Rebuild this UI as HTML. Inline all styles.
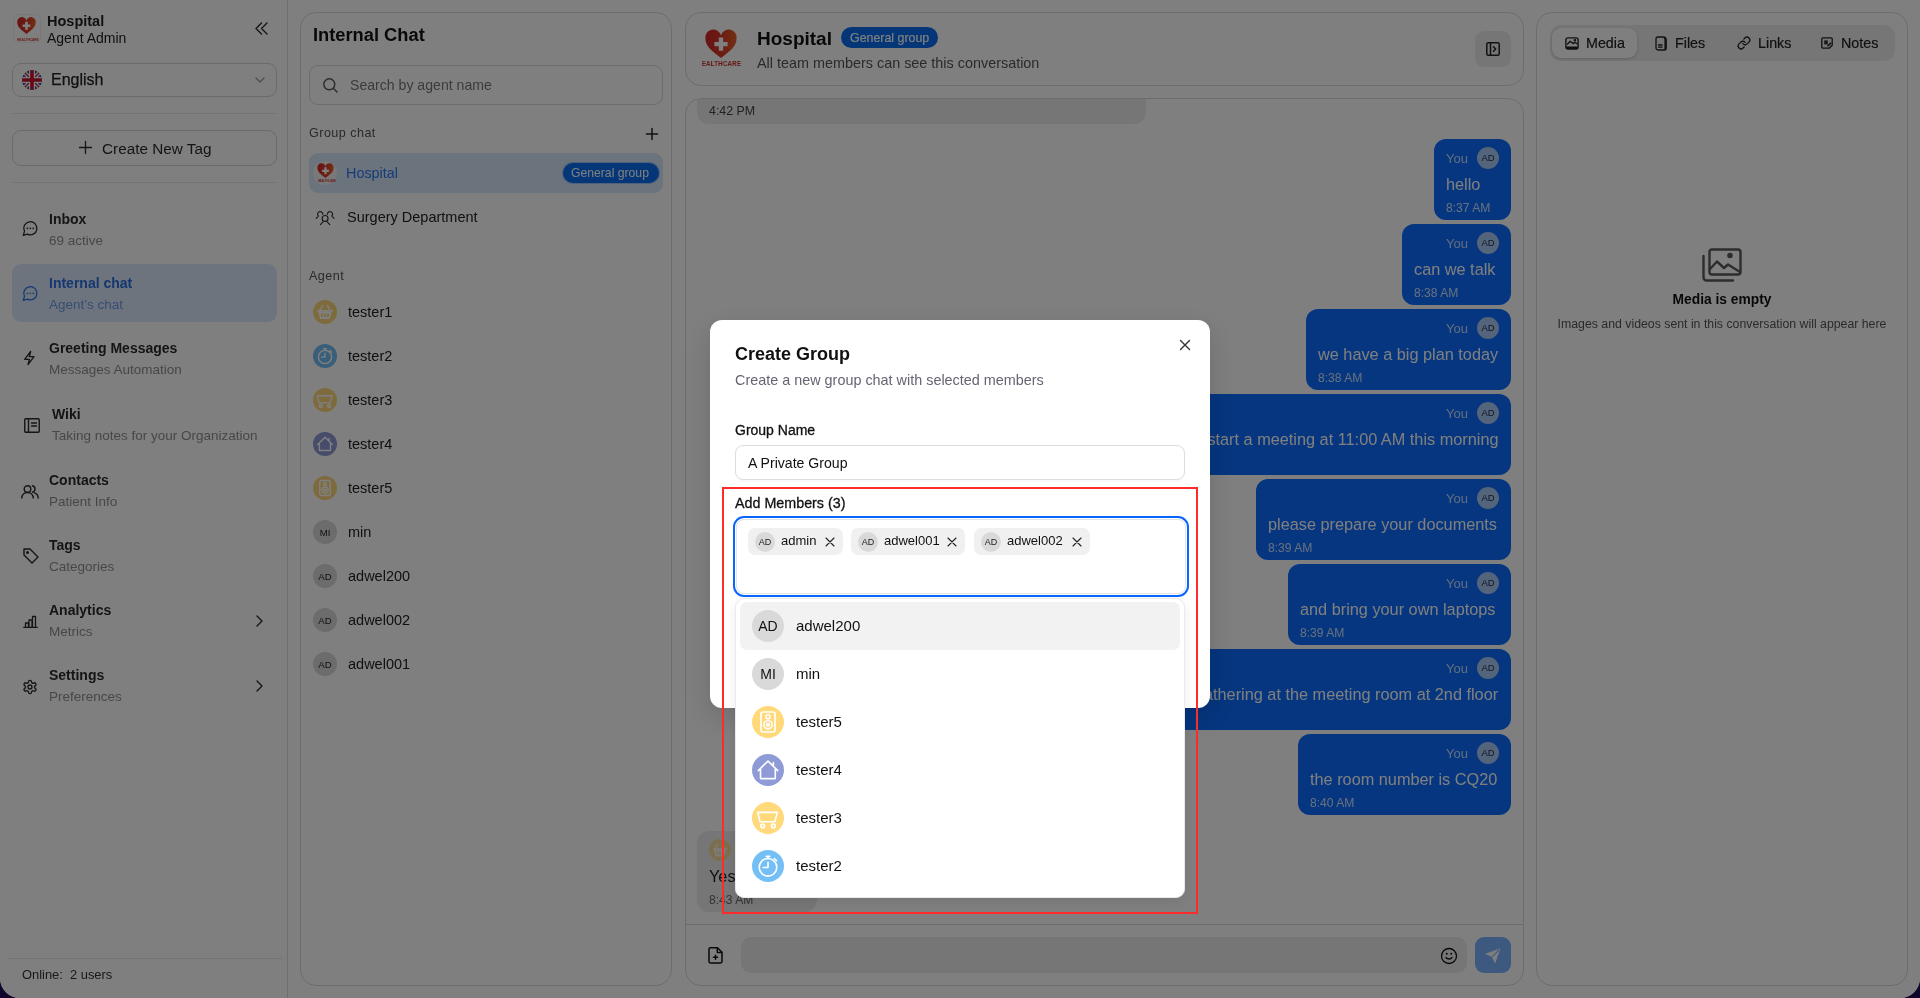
<!DOCTYPE html><html><head><meta charset="utf-8"><style>
*{box-sizing:border-box;margin:0;padding:0}
html,body{width:1920px;height:998px;overflow:hidden;background:#10052a}
body{font-family:"Liberation Sans",sans-serif;color:#222;position:relative}
.abs{position:absolute}
.t{position:absolute;white-space:nowrap;line-height:1;will-change:transform}
svg{overflow:visible}
</style></head><body>
<div class="abs" style="left:0;top:0;width:1920px;height:998px;background:#fff;border-radius:0 0 20px 20px"></div>
<div class="abs" style="left:287px;top:0px;width:1px;height:998px;background:#dcdcdc"></div>
<div class="abs" style="left:13px;top:14px;width:28px;height:29px;border-radius:6px;background:#fff;border:1px solid #eee"></div>
<svg class="abs" style="left:17px;top:18px;" width="19" height="16" viewBox="0 0 32 27" fill="none" stroke="#2a2a2a" stroke-width="1.5" stroke-linecap="round" stroke-linejoin="round"><defs><linearGradient id="hg" x1="0" y1="0" x2="1" y2="0"><stop offset="0" stop-color="#d3262a"/><stop offset="0.55" stop-color="#d83a26"/><stop offset="1" stop-color="#e5622c"/></linearGradient></defs><path d="M16 27C6 19.5 0.5 14.5 0.5 8.2A7.6 7.6 0 0 1 16 4.6A7.6 7.6 0 0 1 31.5 8.2C31.5 14.5 26 19.5 16 27Z" fill="url(#hg)" stroke="none"/><path d="M13.8 6.5h4.4v4.4h4.4v4.4h-4.4v4.4h-4.4v-4.4h-4.4v-4.4h4.4z" fill="#fff" stroke="none"/></svg>
<div class="t" style="left:17.00px;top:39.29px;font-size:3.2px;font-weight:700;color:#c8302a;">HEALTHCARE</div>
<div class="t" style="left:47.00px;top:13.73px;font-size:14.5px;font-weight:700;color:#222;">Hospital</div>
<div class="t" style="left:47.00px;top:30.55px;font-size:14px;font-weight:400;color:#222;">Agent Admin</div>
<svg class="abs" style="left:255px;top:22px;" width="13" height="13" viewBox="0 0 13 13" fill="none" stroke="#2a2a2a" stroke-width="1.4" stroke-linecap="round" stroke-linejoin="round"><path d="M6.5 1 1 6.5 6.5 12M12 1 6.5 6.5 12 12"/></svg>
<div class="abs" style="left:12px;top:63px;width:265px;height:34px;border:1px solid #d6d6d6;border-radius:9px"></div>
<svg class="abs" style="left:22px;top:70px" width="20" height="20" viewBox="0 0 20 20"><defs><clipPath id="fc"><circle cx="10" cy="10" r="10"/></clipPath></defs><g clip-path="url(#fc)"><rect width="20" height="20" fill="#1f4aa0"/><path d="M0 0L20 20M20 0L0 20" stroke="#fff" stroke-width="4"/><path d="M0 0L20 20M20 0L0 20" stroke="#c8102e" stroke-width="1.3"/><path d="M10 0V20M0 10H20" stroke="#fff" stroke-width="6"/><path d="M10 0V20M0 10H20" stroke="#c8102e" stroke-width="3.6"/></g></svg>
<div class="t" style="left:50.50px;top:72.46px;font-size:16px;font-weight:400;color:#222;-webkit-text-stroke:0.25px #222">English</div>
<svg class="abs" style="left:255px;top:77px;" width="10" height="6" viewBox="0 0 10 6" fill="none" stroke="#999" stroke-width="1.2" stroke-linecap="round" stroke-linejoin="round"><path d="M1 1 5 5 9 1"/></svg>
<div class="abs" style="left:12px;top:113px;width:265px;height:1px;background:#e6e6e6"></div>
<div class="abs" style="left:12px;top:130px;width:265px;height:36px;border:1px solid #d6d6d6;border-radius:9px"></div>
<svg class="abs" style="left:79px;top:141px;" width="13" height="13" viewBox="0 0 13 13" fill="none" stroke="#2a2a2a" stroke-width="1.3" stroke-linecap="round" stroke-linejoin="round"><path d="M6.5 0.5v12M0.5 6.5h12"/></svg>
<div class="t" style="left:102.00px;top:140.55px;font-size:15.3px;font-weight:400;color:#2a2a2a;">Create New Tag</div>
<div class="abs" style="left:12px;top:182px;width:265px;height:1px;background:#e6e6e6"></div>
<div class="abs" style="left:12px;top:264px;width:265px;height:58px;background:#dbe9fb;border-radius:9px"></div>
<div class="t" style="left:48.50px;top:211.75px;font-size:14px;font-weight:700;color:#2a2a2a;">Inbox</div>
<div class="t" style="left:48.50px;top:233.77px;font-size:13.5px;font-weight:400;color:#8f8f8f;">69 active</div>
<svg class="abs" style="left:22.9px;top:221.29999999999998px;" width="15" height="15" viewBox="2 2 20.5 20.5" fill="none" stroke="#2a2a2a" stroke-width="1.75" stroke-linecap="round" stroke-linejoin="round"><path d="M7.9 20A9 9 0 1 0 4 16.1L2.3 21.7Z"/><path d="M8 12h.01M12 12h.01M16 12h.01" stroke-width="2.3"/></svg>
<div class="t" style="left:48.50px;top:276.15px;font-size:14px;font-weight:700;color:#2a70e0;">Internal chat</div>
<div class="t" style="left:48.50px;top:298.17px;font-size:13.5px;font-weight:400;color:#6a9ae6;">Agent’s chat</div>
<svg class="abs" style="left:22.9px;top:285.7px;" width="15" height="15" viewBox="2 2 20.5 20.5" fill="none" stroke="#2a70e0" stroke-width="1.75" stroke-linecap="round" stroke-linejoin="round"><path d="M7.9 20A9 9 0 1 0 4 16.1L2.3 21.7Z"/><path d="M8 12h.01M12 12h.01M16 12h.01" stroke-width="2.3"/></svg>
<div class="t" style="left:48.50px;top:341.45px;font-size:14px;font-weight:700;color:#2a2a2a;">Greeting Messages</div>
<div class="t" style="left:48.50px;top:363.47px;font-size:13.5px;font-weight:400;color:#8f8f8f;">Messages Automation</div>
<svg class="abs" style="left:22px;top:349.3px;" width="16" height="18" viewBox="0 0 24 24" fill="none" stroke="#2a2a2a" stroke-width="2" stroke-linecap="round" stroke-linejoin="round"><path d="M13 2 4 14h7l-2 8 9-12h-7z"/></svg>
<div class="t" style="left:52.00px;top:407.15px;font-size:14px;font-weight:700;color:#2a2a2a;">Wiki</div>
<div class="t" style="left:52.00px;top:429.17px;font-size:13.5px;font-weight:400;color:#8f8f8f;">Taking notes for your Organization</div>
<svg class="abs" style="left:24px;top:417.5px;" width="16" height="15" viewBox="0 0 16 15" fill="none" stroke="#2a2a2a" stroke-width="1.4" stroke-linecap="round" stroke-linejoin="round"><rect x="0.75" y="0.75" width="14.5" height="13.5" rx="1"/><path d="M4.5 1v13M7.5 5h5M7.5 8h5"/></svg>
<div class="t" style="left:48.50px;top:473.35px;font-size:14px;font-weight:700;color:#2a2a2a;">Contacts</div>
<div class="t" style="left:48.50px;top:495.37px;font-size:13.5px;font-weight:400;color:#8f8f8f;">Patient Info</div>
<svg class="abs" style="left:21px;top:485.2px;" width="18" height="14" viewBox="0 0 18 14" fill="none" stroke="#2a2a2a" stroke-width="1.4" stroke-linecap="round" stroke-linejoin="round"><circle cx="6.5" cy="4" r="3.3"/><path d="M0.8 13c0-3.2 2.5-5.5 5.7-5.5s5.7 2.3 5.7 5.5"/><path d="M11.5 0.8a3.3 3.3 0 0 1 0 6.4M13.5 7.8c2.2.8 3.7 2.7 3.7 5.2"/></svg>
<div class="t" style="left:48.50px;top:537.85px;font-size:14px;font-weight:700;color:#2a2a2a;">Tags</div>
<div class="t" style="left:48.50px;top:559.87px;font-size:13.5px;font-weight:400;color:#8f8f8f;">Categories</div>
<svg class="abs" style="left:23px;top:548.2px;" width="16" height="16" viewBox="0 0 16 16" fill="none" stroke="#2a2a2a" stroke-width="1.4" stroke-linecap="round" stroke-linejoin="round"><path d="M1 1h6l8 8-6 6-8-8z" transform="rotate(0)"/><circle cx="4.5" cy="4.5" r="0.8" fill="#2a2a2a"/></svg>
<div class="t" style="left:48.50px;top:602.95px;font-size:14px;font-weight:700;color:#2a2a2a;">Analytics</div>
<div class="t" style="left:48.50px;top:624.97px;font-size:13.5px;font-weight:400;color:#8f8f8f;">Metrics</div>
<svg class="abs" style="left:23px;top:614.8px;" width="15" height="13" viewBox="0 0 15 13" fill="none" stroke="#2a2a2a" stroke-width="1.3" stroke-linecap="round" stroke-linejoin="round"><path d="M0.7 12.3h13.6M2.5 12V8h3v4M6 12V5h3v7M9.5 12V1.5h3V12"/></svg>
<svg class="abs" style="left:256px;top:614.8px;" width="7" height="12" viewBox="0 0 7 12" fill="none" stroke="#2a2a2a" stroke-width="1.4" stroke-linecap="round" stroke-linejoin="round"><path d="M1 1l5 5-5 5"/></svg>
<div class="t" style="left:48.50px;top:668.15px;font-size:14px;font-weight:700;color:#2a2a2a;">Settings</div>
<div class="t" style="left:48.50px;top:690.17px;font-size:13.5px;font-weight:400;color:#8f8f8f;">Preferences</div>
<svg class="abs" style="left:22px;top:678.5px;" width="16" height="16" viewBox="0 0 24 24" fill="none" stroke="#2a2a2a" stroke-width="2" stroke-linecap="round" stroke-linejoin="round"><path d="M12.22 2h-.44a2 2 0 0 0-2 2v.18a2 2 0 0 1-1 1.73l-.43.25a2 2 0 0 1-2 0l-.15-.08a2 2 0 0 0-2.73.73l-.22.38a2 2 0 0 0 .73 2.73l.15.1a2 2 0 0 1 1 1.72v.51a2 2 0 0 1-1 1.74l-.15.09a2 2 0 0 0-.73 2.73l.22.38a2 2 0 0 0 2.73.73l.15-.08a2 2 0 0 1 2 0l.43.25a2 2 0 0 1 1 1.73V20a2 2 0 0 0 2 2h.44a2 2 0 0 0 2-2v-.18a2 2 0 0 1 1-1.73l.43-.25a2 2 0 0 1 2 0l.15.08a2 2 0 0 0 2.73-.73l.22-.39a2 2 0 0 0-.73-2.73l-.15-.08a2 2 0 0 1-1-1.74v-.5a2 2 0 0 1 1-1.74l.15-.09a2 2 0 0 0 .73-2.73l-.22-.38a2 2 0 0 0-2.73-.73l-.15.08a2 2 0 0 1-2 0l-.43-.25a2 2 0 0 1-1-1.73V4a2 2 0 0 0-2-2z"/><circle cx="12" cy="12" r="3"/></svg>
<svg class="abs" style="left:256px;top:680px;" width="7" height="12" viewBox="0 0 7 12" fill="none" stroke="#2a2a2a" stroke-width="1.4" stroke-linecap="round" stroke-linejoin="round"><path d="M1 1l5 5-5 5"/></svg>
<div class="abs" style="left:7px;top:958px;width:275px;height:1px;background:#e6e6e6"></div>
<div class="t" style="left:22.00px;top:968.58px;font-size:12.9px;font-weight:400;color:#333;">Online:&nbsp; 2 users</div>
<div class="abs" style="left:300px;top:12px;width:372px;height:974px;border:1px solid #d9d9d9;border-radius:16px"></div>
<div class="t" style="left:313.00px;top:25.91px;font-size:18.3px;font-weight:700;color:#111;">Internal Chat</div>
<div class="abs" style="left:309px;top:65px;width:354px;height:40px;border:1px solid #d9d9d9;border-radius:9px"></div>
<svg class="abs" style="left:322.5px;top:78px;" width="15" height="15" viewBox="0 0 15 15" fill="none" stroke="#555" stroke-width="1.4" stroke-linecap="round" stroke-linejoin="round"><circle cx="6.3" cy="6.3" r="5.5"/><path d="M10.3 10.3 14 14"/></svg>
<div class="t" style="left:350.00px;top:78.26px;font-size:14.1px;font-weight:400;color:#777;">Search by agent name</div>
<div class="t" style="left:309.00px;top:126.63px;font-size:12.6px;font-weight:400;color:#555;letter-spacing:0.45px">Group chat</div>
<svg class="abs" style="left:645.5px;top:127.5px;" width="12" height="12" viewBox="0 0 12 12" fill="none" stroke="#222" stroke-width="1.5" stroke-linecap="round" stroke-linejoin="round"><path d="M6 0.5v11M0.5 6h11"/></svg>
<div class="abs" style="left:309px;top:153px;width:354px;height:40px;background:#d7e6fb;border-radius:9px"></div>
<div class="abs" style="left:313px;top:161px;width:24px;height:24px;border-radius:50%;background:#f2f2f2"></div>
<svg class="abs" style="left:316.5px;top:164px;" width="17" height="14" viewBox="0 0 32 27" fill="none" stroke="#2a2a2a" stroke-width="1.5" stroke-linecap="round" stroke-linejoin="round"><defs><linearGradient id="hg2" x1="0" y1="0" x2="1" y2="0"><stop offset="0" stop-color="#d3262a"/><stop offset="0.55" stop-color="#d83a26"/><stop offset="1" stop-color="#e5622c"/></linearGradient></defs><path d="M16 27C6 19.5 0.5 14.5 0.5 8.2A7.6 7.6 0 0 1 16 4.6A7.6 7.6 0 0 1 31.5 8.2C31.5 14.5 26 19.5 16 27Z" fill="url(#hg2)" stroke="none"/><path d="M13.8 6.5h4.4v4.4h4.4v4.4h-4.4v4.4h-4.4v-4.4h-4.4v-4.4h4.4z" fill="#fff" stroke="none"/></svg>
<div class="t" style="left:318.00px;top:180.60px;font-size:2.6px;font-weight:700;color:#c8302a;">HEALTHCARE</div>
<div class="t" style="left:346.00px;top:166.21px;font-size:14.4px;font-weight:400;color:#2a78f0;">Hospital</div>
<div class="abs" style="left:561.5px;top:162px;width:98px;height:22px;background:#0a6cf0;border-radius:11px;border:1px solid rgba(255,255,255,.6)"></div>
<div class="t" style="left:571.00px;top:166.87px;font-size:12.2px;font-weight:400;color:#fff;">General group</div>
<svg class="abs" style="left:315px;top:210px;" width="20" height="16" viewBox="0 0 20 16" fill="none" stroke="#333" stroke-width="1.2" stroke-linecap="round" stroke-linejoin="round"><path d="M7.8 4.2A2.6 2.6 0 1 0 3.36 6.04L1.2 8.3M12.4 4.2A2.6 2.6 0 1 1 16.84 6.04L19 8.3"/><circle cx="10.1" cy="8.4" r="2.9"/><path d="M5.4 14.6 8 11.9M12.2 11.9 14.8 14.6"/></svg>
<div class="t" style="left:347.00px;top:210.03px;font-size:14.5px;font-weight:400;color:#222;">Surgery Department</div>
<div class="t" style="left:309.00px;top:269.83px;font-size:12.6px;font-weight:400;color:#555;letter-spacing:0.45px">Agent</div>
<div class="abs" style="left:313px;top:299.7px;width:24px;height:24px;border-radius:50%;background:#fdd77a"></div>
<svg class="abs" style="left:313px;top:299.7px;" width="24" height="24" viewBox="0 0 32 32" fill="none" stroke="#fff" stroke-width="1.9" stroke-linecap="round" stroke-linejoin="round"><path d="M9.6 13 12.6 7.4M22.4 13 19.4 7.4" stroke-width="1.9"/><rect x="5.3" y="13.3" width="21.4" height="2.5" rx="1.2" fill="#fff" stroke="none"/><path d="M7 15.5H25L22.4 25.4H9.6Z" fill="#fff" stroke="none"/><rect x="10.9" y="17.9" width="2.3" height="4.8" fill="#fdd77a" stroke="none"/><rect x="14.85" y="17.9" width="2.3" height="4.8" fill="#fdd77a" stroke="none"/><rect x="18.8" y="17.9" width="2.3" height="4.8" fill="#fdd77a" stroke="none"/></svg>
<div class="t" style="left:347.50px;top:304.93px;font-size:14.5px;font-weight:400;color:#222;">tester1</div>
<div class="abs" style="left:313px;top:343.7px;width:24px;height:24px;border-radius:50%;background:#72bdf3"></div>
<svg class="abs" style="left:313px;top:343.7px;" width="24" height="24" viewBox="0 0 32 32" fill="none" stroke="#fff" stroke-width="1.9" stroke-linecap="round" stroke-linejoin="round"><circle cx="16" cy="17.3" r="8.8"/><path d="M16 12.3V17.5H11.2M14.2 6.4H17.8M16 6.6V8.4M22.4 8.6l2.2 2.2"/></svg>
<div class="t" style="left:347.50px;top:348.93px;font-size:14.5px;font-weight:400;color:#222;">tester2</div>
<div class="abs" style="left:313px;top:387.7px;width:24px;height:24px;border-radius:50%;background:#fdd77a"></div>
<svg class="abs" style="left:313px;top:387.7px;" width="24" height="24" viewBox="0 0 32 32" fill="none" stroke="#fff" stroke-width="1.9" stroke-linecap="round" stroke-linejoin="round"><path d="M5.8 10.4H25.4L22.8 19.8H8Z"/><circle cx="10.6" cy="24" r="1.9"/><circle cx="21.4" cy="24" r="1.9"/></svg>
<div class="t" style="left:347.50px;top:392.93px;font-size:14.5px;font-weight:400;color:#222;">tester3</div>
<div class="abs" style="left:313px;top:431.7px;width:24px;height:24px;border-radius:50%;background:#8c99d5"></div>
<svg class="abs" style="left:313px;top:431.7px;" width="24" height="24" viewBox="0 0 32 32" fill="none" stroke="#fff" stroke-width="1.9" stroke-linecap="round" stroke-linejoin="round"><path d="M6.3 16.6 16 7 25.7 16.6M8.5 14.6V24.6H23.3V14.6M21.4 8.5V12.2"/></svg>
<div class="t" style="left:347.50px;top:436.93px;font-size:14.5px;font-weight:400;color:#222;">tester4</div>
<div class="abs" style="left:313px;top:475.7px;width:24px;height:24px;border-radius:50%;background:#fdd77a"></div>
<svg class="abs" style="left:313px;top:475.7px;" width="24" height="24" viewBox="0 0 32 32" fill="none" stroke="#fff" stroke-width="1.9" stroke-linecap="round" stroke-linejoin="round"><rect x="9" y="6" width="14" height="20" rx="2"/><circle cx="16" cy="10.8" r="2"/><circle cx="16" cy="18.8" r="4.1"/><circle cx="16" cy="18.8" r="1.3" fill="#fff"/></svg>
<div class="t" style="left:347.50px;top:480.93px;font-size:14.5px;font-weight:400;color:#222;">tester5</div>
<div class="abs" style="left:313px;top:519.7px;width:24px;height:24px;border-radius:50%;background:#d9d9d9;color:#222;font-size:9.6px;line-height:25.5px;text-align:center;white-space:nowrap;will-change:transform">MI</div>
<div class="t" style="left:347.50px;top:524.93px;font-size:14.5px;font-weight:400;color:#222;">min</div>
<div class="abs" style="left:313px;top:563.7px;width:24px;height:24px;border-radius:50%;background:#d9d9d9;color:#222;font-size:9.6px;line-height:25.5px;text-align:center;white-space:nowrap;will-change:transform">AD</div>
<div class="t" style="left:347.50px;top:568.93px;font-size:14.5px;font-weight:400;color:#222;">adwel200</div>
<div class="abs" style="left:313px;top:607.7px;width:24px;height:24px;border-radius:50%;background:#d9d9d9;color:#222;font-size:9.6px;line-height:25.5px;text-align:center;white-space:nowrap;will-change:transform">AD</div>
<div class="t" style="left:347.50px;top:612.93px;font-size:14.5px;font-weight:400;color:#222;">adwel002</div>
<div class="abs" style="left:313px;top:651.7px;width:24px;height:24px;border-radius:50%;background:#d9d9d9;color:#222;font-size:9.6px;line-height:25.5px;text-align:center;white-space:nowrap;will-change:transform">AD</div>
<div class="t" style="left:347.50px;top:656.93px;font-size:14.5px;font-weight:400;color:#222;">adwel001</div>
<div class="abs" style="left:685px;top:12px;width:839px;height:74px;border:1px solid #d9d9d9;border-radius:16px"></div>
<svg class="abs" style="left:705px;top:31px;" width="32" height="27" viewBox="0 0 32 27" fill="none" stroke="#2a2a2a" stroke-width="1.5" stroke-linecap="round" stroke-linejoin="round"><defs><linearGradient id="hg3" x1="0" y1="0" x2="1" y2="0"><stop offset="0" stop-color="#d3262a"/><stop offset="0.55" stop-color="#d83a26"/><stop offset="1" stop-color="#e5622c"/></linearGradient></defs><path d="M16 27C6 19.5 0.5 14.5 0.5 8.2A7.6 7.6 0 0 1 16 4.6A7.6 7.6 0 0 1 31.5 8.2C31.5 14.5 26 19.5 16 27Z" fill="url(#hg3)" stroke="none"/><path d="M13.8 6.5h4.4v4.4h4.4v4.4h-4.4v4.4h-4.4v-4.4h-4.4v-4.4h4.4z" fill="#fff" stroke="none"/></svg>
<div class="abs" style="left:702px;top:59px;width:39px;height:9px;overflow:hidden"><div class="t" style="left:-5px;top:0.5px;font-size:8px;font-weight:700;color:#c8302a;transform:scaleX(.78);transform-origin:left top;letter-spacing:0.2px">HEALTHCARE</div></div>
<div class="t" style="left:756.50px;top:29.12px;font-size:19px;font-weight:700;color:#111;">Hospital</div>
<div class="abs" style="left:841px;top:27px;width:97px;height:21px;background:#0a6cf0;border-radius:11px"></div>
<div class="t" style="left:850.00px;top:32.30px;font-size:12.4px;font-weight:400;color:#fff;-webkit-text-stroke:0.15px #fff">General group</div>
<div class="t" style="left:757.00px;top:55.51px;font-size:14.4px;font-weight:400;color:#555;">All team members can see this conversation</div>
<div class="abs" style="left:1475px;top:31px;width:36px;height:36px;background:#ececec;border-radius:9px"></div>
<svg class="abs" style="left:1486px;top:42px;" width="14" height="14" viewBox="0 0 14 14" fill="none" stroke="#222" stroke-width="1.5" stroke-linecap="round" stroke-linejoin="round"><rect x="0.8" y="0.8" width="12.4" height="12.4" rx="1.5"/><path d="M4.5 1v12M7.5 4.8 9.7 7 7.5 9.2"/></svg>
<div class="abs" style="left:685px;top:98px;width:839px;height:888px;border:1px solid #d9d9d9;border-radius:16px;overflow:hidden">
<div class="abs" style="left:11px;top:-30px;width:449px;height:55px;background:#ececec;border-radius:12px"></div>
</div>
<div class="t" style="left:709.00px;top:105.00px;font-size:12.4px;font-weight:400;color:#444;">4:42 PM</div>
<div class="abs" style="left:1434px;top:139px;width:77px;height:81px;background:#0a6cff;border-radius:12px"></div>
<div class="t" style="right:452.00px;top:152.00px;font-size:13px;font-weight:400;color:rgba(255,255,255,.75);">You</div>
<div class="abs" style="left:1477px;top:147px;width:22px;height:22px;border-radius:50%;background:#a9c8f7;color:#1b2a44;font-size:9.5px;line-height:22px;text-align:center;white-space:nowrap;will-change:transform">AD</div>
<div class="t" style="left:1446.00px;top:176.20px;font-size:16.3px;font-weight:400;color:#fff;">hello</div>
<div class="t" style="left:1446.00px;top:201.76px;font-size:12.1px;font-weight:400;color:rgba(255,255,255,.8);">8:37 AM</div>
<div class="abs" style="left:1402px;top:224px;width:109px;height:81px;background:#0a6cff;border-radius:12px"></div>
<div class="t" style="right:452.00px;top:237.00px;font-size:13px;font-weight:400;color:rgba(255,255,255,.75);">You</div>
<div class="abs" style="left:1477px;top:232px;width:22px;height:22px;border-radius:50%;background:#a9c8f7;color:#1b2a44;font-size:9.5px;line-height:22px;text-align:center;white-space:nowrap;will-change:transform">AD</div>
<div class="t" style="left:1414.00px;top:261.20px;font-size:16.3px;font-weight:400;color:#fff;">can we talk</div>
<div class="t" style="left:1414.00px;top:286.76px;font-size:12.1px;font-weight:400;color:rgba(255,255,255,.8);">8:38 AM</div>
<div class="abs" style="left:1306px;top:309px;width:205px;height:81px;background:#0a6cff;border-radius:12px"></div>
<div class="t" style="right:452.00px;top:322.00px;font-size:13px;font-weight:400;color:rgba(255,255,255,.75);">You</div>
<div class="abs" style="left:1477px;top:317px;width:22px;height:22px;border-radius:50%;background:#a9c8f7;color:#1b2a44;font-size:9.5px;line-height:22px;text-align:center;white-space:nowrap;will-change:transform">AD</div>
<div class="t" style="left:1318.00px;top:346.20px;font-size:16.3px;font-weight:400;color:#fff;">we have a big plan today</div>
<div class="t" style="left:1318.00px;top:371.76px;font-size:12.1px;font-weight:400;color:rgba(255,255,255,.8);">8:38 AM</div>
<div class="abs" style="left:1060px;top:394px;width:451px;height:81px;background:#0a6cff;border-radius:12px"></div>
<div class="t" style="right:452.00px;top:407.00px;font-size:13px;font-weight:400;color:rgba(255,255,255,.75);">You</div>
<div class="abs" style="left:1477px;top:402px;width:22px;height:22px;border-radius:50%;background:#a9c8f7;color:#1b2a44;font-size:9.5px;line-height:22px;text-align:center;white-space:nowrap;will-change:transform">AD</div>
<div class="t" style="right:421.50px;top:431.20px;font-size:16.3px;font-weight:400;color:#fff;">Hi everyone, we will start a meeting at 11:00 AM this morning</div>
<div class="t" style="left:1072.00px;top:456.76px;font-size:12.1px;font-weight:400;color:rgba(255,255,255,.8);">8:38 AM</div>
<div class="abs" style="left:1256px;top:479px;width:255px;height:81px;background:#0a6cff;border-radius:12px"></div>
<div class="t" style="right:452.00px;top:492.00px;font-size:13px;font-weight:400;color:rgba(255,255,255,.75);">You</div>
<div class="abs" style="left:1477px;top:487px;width:22px;height:22px;border-radius:50%;background:#a9c8f7;color:#1b2a44;font-size:9.5px;line-height:22px;text-align:center;white-space:nowrap;will-change:transform">AD</div>
<div class="t" style="left:1268.00px;top:516.20px;font-size:16.3px;font-weight:400;color:#fff;">please prepare your documents</div>
<div class="t" style="left:1268.00px;top:541.76px;font-size:12.1px;font-weight:400;color:rgba(255,255,255,.8);">8:39 AM</div>
<div class="abs" style="left:1288px;top:564px;width:223px;height:81px;background:#0a6cff;border-radius:12px"></div>
<div class="t" style="right:452.00px;top:577.00px;font-size:13px;font-weight:400;color:rgba(255,255,255,.75);">You</div>
<div class="abs" style="left:1477px;top:572px;width:22px;height:22px;border-radius:50%;background:#a9c8f7;color:#1b2a44;font-size:9.5px;line-height:22px;text-align:center;white-space:nowrap;will-change:transform">AD</div>
<div class="t" style="left:1300.00px;top:601.20px;font-size:16.3px;font-weight:400;color:#fff;">and bring your own laptops</div>
<div class="t" style="left:1300.00px;top:626.76px;font-size:12.1px;font-weight:400;color:rgba(255,255,255,.8);">8:39 AM</div>
<div class="abs" style="left:1060px;top:649px;width:451px;height:81px;background:#0a6cff;border-radius:12px"></div>
<div class="t" style="right:452.00px;top:662.00px;font-size:13px;font-weight:400;color:rgba(255,255,255,.75);">You</div>
<div class="abs" style="left:1477px;top:657px;width:22px;height:22px;border-radius:50%;background:#a9c8f7;color:#1b2a44;font-size:9.5px;line-height:22px;text-align:center;white-space:nowrap;will-change:transform">AD</div>
<div class="t" style="right:421.50px;top:686.20px;font-size:16.3px;font-weight:400;color:#fff;">Everyone, we will be gathering at the meeting room at 2nd floor</div>
<div class="t" style="left:1072.00px;top:711.76px;font-size:12.1px;font-weight:400;color:rgba(255,255,255,.8);">8:40 AM</div>
<div class="abs" style="left:1298px;top:734px;width:213px;height:81px;background:#0a6cff;border-radius:12px"></div>
<div class="t" style="right:452.00px;top:747.00px;font-size:13px;font-weight:400;color:rgba(255,255,255,.75);">You</div>
<div class="abs" style="left:1477px;top:742px;width:22px;height:22px;border-radius:50%;background:#a9c8f7;color:#1b2a44;font-size:9.5px;line-height:22px;text-align:center;white-space:nowrap;will-change:transform">AD</div>
<div class="t" style="left:1310.00px;top:771.20px;font-size:16.3px;font-weight:400;color:#fff;">the room number is CQ20</div>
<div class="t" style="left:1310.00px;top:796.76px;font-size:12.1px;font-weight:400;color:rgba(255,255,255,.8);">8:40 AM</div>
<div class="abs" style="left:697px;top:831px;width:120px;height:81px;background:#ececec;border-radius:12px"></div>
<div class="abs" style="left:0;top:0;opacity:.7">
<div class="abs" style="left:709px;top:839px;width:22px;height:22px;border-radius:50%;background:#fdd77a"></div>
<svg class="abs" style="left:709px;top:839px;" width="22" height="22" viewBox="0 0 32 32" fill="none" stroke="#fff" stroke-width="2" stroke-linecap="round" stroke-linejoin="round"><path d="M9.6 13 12.6 7.4M22.4 13 19.4 7.4" stroke-width="1.9"/><rect x="5.3" y="13.3" width="21.4" height="2.5" rx="1.2" fill="#fff" stroke="none"/><path d="M7 15.5H25L22.4 25.4H9.6Z" fill="#fff" stroke="none"/><rect x="10.9" y="17.9" width="2.3" height="4.8" fill="#fdd77a" stroke="none"/><rect x="14.85" y="17.9" width="2.3" height="4.8" fill="#fdd77a" stroke="none"/><rect x="18.8" y="17.9" width="2.3" height="4.8" fill="#fdd77a" stroke="none"/></svg>
</div>
<div class="t" style="left:709.00px;top:867.50px;font-size:16.3px;font-weight:400;color:#222;">Yes</div>
<div class="t" style="left:709.00px;top:893.96px;font-size:12.1px;font-weight:400;color:#666;">8:43 AM</div>
<div class="abs" style="left:686px;top:923.5px;width:837px;height:1px;background:#d9d9d9"></div>
<svg class="abs" style="left:707.5px;top:946.5px;" width="15" height="17" viewBox="0 0 15 17" fill="none" stroke="#111" stroke-width="1.5" stroke-linecap="round" stroke-linejoin="round"><path d="M1 2.2A1.4 1.4 0 0 1 2.4 0.8H9.5L14 5.3V14.6A1.4 1.4 0 0 1 12.6 16H2.4A1.4 1.4 0 0 1 1 14.6Z"/><path d="M9.3 1V5.5H13.8M7.5 8.3V12.3M5.5 10.3H9.5"/></svg>
<div class="abs" style="left:741px;top:937px;width:726px;height:36px;background:#ececec;border-radius:10px"></div>
<svg class="abs" style="left:1440px;top:946.5px;" width="18" height="18" viewBox="0 0 24 24" fill="none" stroke="#111" stroke-width="1.7" stroke-linecap="round" stroke-linejoin="round"><circle cx="12" cy="12" r="10"/><path d="M8 14s1.5 2 4 2 4-2 4-2"/><path d="M9 9h.01M15 9h.01" stroke-width="2.6"/></svg>
<div class="abs" style="left:1475px;top:937px;width:36px;height:36px;background:#7ab3ff;border-radius:9px"></div>
<svg class="abs" style="left:1485px;top:947.5px;" width="16" height="16" viewBox="0 0 24 24" fill="none" stroke="#fff" stroke-width="1.5" stroke-linecap="round" stroke-linejoin="round"><path d="M22 2 15 22 11 13 2 9Z" fill="#fff" stroke="#fff" stroke-width="1.2"/><path d="M21 3 11.5 12.5" stroke="#7ab3ff" stroke-width="1.6"/></svg>
<div class="abs" style="left:1536px;top:12px;width:372px;height:974px;border:1px solid #d9d9d9;border-radius:16px"></div>
<div class="abs" style="left:1550px;top:25px;width:345px;height:36px;background:#ececec;border-radius:11px"></div>
<div class="abs" style="left:1552px;top:28px;width:85px;height:30px;background:#fff;border-radius:9px;box-shadow:0 1px 3px rgba(0,0,0,.18)"></div>
<svg class="abs" style="left:1565px;top:36.5px;" width="14" height="13" viewBox="0 0 14 13" fill="none" stroke="#222" stroke-width="1.4" stroke-linecap="round" stroke-linejoin="round"><rect x="0.9" y="0.9" width="12.2" height="11.2" rx="2"/><path d="M1.2 9.6H12.8V11A1.2 1.2 0 0 1 11.6 12.1H2.4A1.2 1.2 0 0 1 1.2 11Z" fill="#222" stroke="none"/><path d="M2.6 7 5.2 4.3 8.2 6.6 9.8 5.2 12 6.8"/><circle cx="9.9" cy="3.2" r="0.6" fill="#222"/></svg>
<div class="t" style="left:1586.00px;top:36.10px;font-size:14.3px;font-weight:400;color:#222;-webkit-text-stroke:0.2px #222">Media</div>
<svg class="abs" style="left:1655px;top:36px;" width="12" height="15" viewBox="0 0 12 15" fill="none" stroke="#222" stroke-width="1.3" stroke-linecap="round" stroke-linejoin="round"><path d="M3 1H8.2A3 3 0 0 1 11.2 4V12A2 2 0 0 1 9.2 14H3A2 2 0 0 1 1 12V3A2 2 0 0 1 3 1Z"/><path d="M8.6 1.4C10.4 2 11 3.5 11 5V12.5C11 13.2 10.2 13.8 9.4 13.8V4.2C9.4 3 9 2 8.6 1.4Z" fill="#222" stroke="none"/><path d="M3.5 9H7M3.5 11.2H7"/></svg>
<div class="t" style="left:1675.00px;top:36.10px;font-size:14.3px;font-weight:400;color:#222;-webkit-text-stroke:0.2px #222">Files</div>
<svg class="abs" style="left:1737px;top:35.5px;" width="14" height="14" viewBox="0 0 24 24" fill="none" stroke="#222" stroke-width="2.2" stroke-linecap="round" stroke-linejoin="round"><path d="M10 13a5 5 0 0 0 7.54.54l3-3a5 5 0 0 0-7.07-7.07l-1.72 1.71"/><path d="M14 11a5 5 0 0 0-7.54-.54l-3 3a5 5 0 0 0 7.07 7.07l1.71-1.71"/></svg>
<div class="t" style="left:1758.00px;top:36.10px;font-size:14.3px;font-weight:400;color:#222;-webkit-text-stroke:0.2px #222">Links</div>
<svg class="abs" style="left:1821px;top:37px;" width="12" height="12" viewBox="0 0 12 12" fill="none" stroke="#222" stroke-width="1.3" stroke-linecap="round" stroke-linejoin="round"><path d="M1.8 0.8H10.2A1 1 0 0 1 11.2 1.8V8.2L8.2 11.2H1.8A1 1 0 0 1 0.8 10.2V1.8A1 1 0 0 1 1.8 0.8Z"/><rect x="3.2" y="3.4" width="3.6" height="4" fill="#333" stroke="none"/><path d="M7 8.8 9.6 6.2" stroke-width="1.6"/></svg>
<div class="t" style="left:1841.00px;top:36.10px;font-size:14.3px;font-weight:400;color:#222;-webkit-text-stroke:0.2px #222">Notes</div>
<svg class="abs" style="left:1702px;top:248px;" width="40" height="34" viewBox="0 0 40 34" fill="none" stroke="#5a5a5a" stroke-width="2.4" stroke-linecap="round" stroke-linejoin="round"><rect x="7.5" y="1.5" width="31" height="25" rx="2.5"/><path d="M1.5 8V29.5A3 3 0 0 0 4.5 32.5H31"/><path d="M8 21 15 13.5 22 20 26 16.5 38 24"/><circle cx="28" cy="7.5" r="1.6" fill="#5a5a5a"/></svg>
<div class="t" style="left:1422.00px;width:600px;text-align:center;top:293.12px;font-size:13.8px;font-weight:700;color:#111;">Media is empty</div>
<div class="t" style="left:1422.00px;width:600px;text-align:center;top:318.19px;font-size:12.3px;font-weight:400;color:#555;">Images and videos sent in this conversation will appear here</div>
<div class="abs" style="left:0;top:0;width:1920px;height:998px;background:rgba(0,0,0,.5);border-radius:0 0 20px 20px"></div>
<div class="abs" style="left:710px;top:320px;width:500px;height:388px;background:#fff;border-radius:12px;box-shadow:0 10px 30px rgba(0,0,0,.15)"></div>
<div class="t" style="left:735.00px;top:344.76px;font-size:18px;font-weight:700;color:#111;">Create Group</div>
<svg class="abs" style="left:1180px;top:339.5px;" width="10" height="10" viewBox="0 0 10 10" fill="none" stroke="#333" stroke-width="1.4" stroke-linecap="round" stroke-linejoin="round"><path d="M0.5 0.5 9.5 9.5M9.5 0.5 0.5 9.5"/></svg>
<div class="t" style="left:735.00px;top:372.81px;font-size:14.4px;font-weight:400;color:#646474;">Create a new group chat with selected members</div>
<div class="t" style="left:735.00px;top:422.65px;font-size:14px;font-weight:400;color:#111;-webkit-text-stroke:0.3px #111">Group Name</div>
<div class="abs" style="left:735px;top:445px;width:450px;height:35px;border:1px solid #dedede;border-radius:8px;box-shadow:0 1px 2px rgba(0,0,0,.04)"></div>
<div class="t" style="left:748.00px;top:455.56px;font-size:14.1px;font-weight:400;color:#111;">A Private Group</div>
<div class="t" style="left:735.00px;top:496.40px;font-size:14.3px;font-weight:400;color:#111;-webkit-text-stroke:0.3px #111">Add Members (3)</div>
<div class="abs" style="left:733px;top:515.5px;width:456px;height:81px;border:2px solid #0a66ff;border-radius:11px"></div>
<div class="abs" style="left:736px;top:518.5px;width:450px;height:75px;border:1px solid #e3e3e3;border-radius:8px"></div>
<div class="abs" style="left:748px;top:528px;width:95px;height:27px;background:#f0f0f0;border-radius:7px"></div>
<div class="abs" style="left:755px;top:531.5px;width:20px;height:20px;border-radius:50%;background:#d9d9d9;color:#1a1a1a;font-size:9px;line-height:20.5px;text-align:center;white-space:nowrap;will-change:transform">AD</div>
<div class="t" style="left:781.00px;top:534.20px;font-size:13px;font-weight:400;color:#111;">admin</div>
<svg class="abs" style="left:825px;top:536.5px;" width="10" height="10" viewBox="0 0 10 10" fill="none" stroke="#222" stroke-width="1.1" stroke-linecap="round" stroke-linejoin="round"><path d="M1 1 9 9M9 1 1 9"/></svg>
<div class="abs" style="left:851px;top:528px;width:114px;height:27px;background:#f0f0f0;border-radius:7px"></div>
<div class="abs" style="left:858px;top:531.5px;width:20px;height:20px;border-radius:50%;background:#d9d9d9;color:#1a1a1a;font-size:9px;line-height:20.5px;text-align:center;white-space:nowrap;will-change:transform">AD</div>
<div class="t" style="left:884.00px;top:534.20px;font-size:13px;font-weight:400;color:#111;">adwel001</div>
<svg class="abs" style="left:947px;top:536.5px;" width="10" height="10" viewBox="0 0 10 10" fill="none" stroke="#222" stroke-width="1.1" stroke-linecap="round" stroke-linejoin="round"><path d="M1 1 9 9M9 1 1 9"/></svg>
<div class="abs" style="left:974px;top:528px;width:116px;height:27px;background:#f0f0f0;border-radius:7px"></div>
<div class="abs" style="left:981px;top:531.5px;width:20px;height:20px;border-radius:50%;background:#d9d9d9;color:#1a1a1a;font-size:9px;line-height:20.5px;text-align:center;white-space:nowrap;will-change:transform">AD</div>
<div class="t" style="left:1007.00px;top:534.20px;font-size:13px;font-weight:400;color:#111;">adwel002</div>
<svg class="abs" style="left:1072px;top:536.5px;" width="10" height="10" viewBox="0 0 10 10" fill="none" stroke="#222" stroke-width="1.1" stroke-linecap="round" stroke-linejoin="round"><path d="M1 1 9 9M9 1 1 9"/></svg>
<div class="abs" style="left:735px;top:597.5px;width:450px;height:300px;background:#fff;border:1px solid #eaeaea;border-radius:9px;box-shadow:0 4px 12px rgba(0,0,0,.08)"></div>
<div class="abs" style="left:740px;top:601.5px;width:440px;height:48px;background:#f2f2f2;border-radius:7px"></div>
<div class="abs" style="left:752px;top:609.5px;width:32px;height:32px;border-radius:50%;background:#d9d9d9;color:#111;font-size:14px;line-height:32.5px;text-align:center;white-space:nowrap;will-change:transform">AD</div>
<div class="t" style="left:796.00px;top:618.10px;font-size:15px;font-weight:400;color:#111;">adwel200</div>
<div class="abs" style="left:752px;top:657.5px;width:32px;height:32px;border-radius:50%;background:#d9d9d9;color:#111;font-size:14px;line-height:32.5px;text-align:center;white-space:nowrap;will-change:transform">MI</div>
<div class="t" style="left:796.00px;top:666.10px;font-size:15px;font-weight:400;color:#111;">min</div>
<div class="abs" style="left:752px;top:705.5px;width:32px;height:32px;border-radius:50%;background:#ffd97a"></div>
<svg class="abs" style="left:752px;top:705.5px;" width="32" height="32" viewBox="0 0 32 32" fill="none" stroke="#fff" stroke-width="1.6" stroke-linecap="round" stroke-linejoin="round"><rect x="9" y="6" width="14" height="20" rx="2"/><circle cx="16" cy="10.8" r="2"/><circle cx="16" cy="18.8" r="4.1"/><circle cx="16" cy="18.8" r="1.3" fill="#fff"/></svg>
<div class="t" style="left:796.00px;top:714.10px;font-size:15px;font-weight:400;color:#111;">tester5</div>
<div class="abs" style="left:752px;top:753.5px;width:32px;height:32px;border-radius:50%;background:#8e9bd6"></div>
<svg class="abs" style="left:752px;top:753.5px;" width="32" height="32" viewBox="0 0 32 32" fill="none" stroke="#fff" stroke-width="1.6" stroke-linecap="round" stroke-linejoin="round"><path d="M6.3 16.6 16 7 25.7 16.6M8.5 14.6V24.6H23.3V14.6M21.4 8.5V12.2"/></svg>
<div class="t" style="left:796.00px;top:762.10px;font-size:15px;font-weight:400;color:#111;">tester4</div>
<div class="abs" style="left:752px;top:801.5px;width:32px;height:32px;border-radius:50%;background:#ffd97a"></div>
<svg class="abs" style="left:752px;top:801.5px;" width="32" height="32" viewBox="0 0 32 32" fill="none" stroke="#fff" stroke-width="1.6" stroke-linecap="round" stroke-linejoin="round"><path d="M5.8 10.4H25.4L22.8 19.8H8Z"/><circle cx="10.6" cy="24" r="1.9"/><circle cx="21.4" cy="24" r="1.9"/></svg>
<div class="t" style="left:796.00px;top:810.10px;font-size:15px;font-weight:400;color:#111;">tester3</div>
<div class="abs" style="left:752px;top:849.5px;width:32px;height:32px;border-radius:50%;background:#74bff5"></div>
<svg class="abs" style="left:752px;top:849.5px;" width="32" height="32" viewBox="0 0 32 32" fill="none" stroke="#fff" stroke-width="1.6" stroke-linecap="round" stroke-linejoin="round"><circle cx="16" cy="17.3" r="8.8"/><path d="M16 12.3V17.5H11.2M14.2 6.4H17.8M16 6.6V8.4M22.4 8.6l2.2 2.2"/></svg>
<div class="t" style="left:796.00px;top:858.10px;font-size:15px;font-weight:400;color:#111;">tester2</div>
<div class="abs" style="left:722px;top:487px;width:476px;height:426.5px;border:2px solid #ff2b2b"></div>
</body></html>
